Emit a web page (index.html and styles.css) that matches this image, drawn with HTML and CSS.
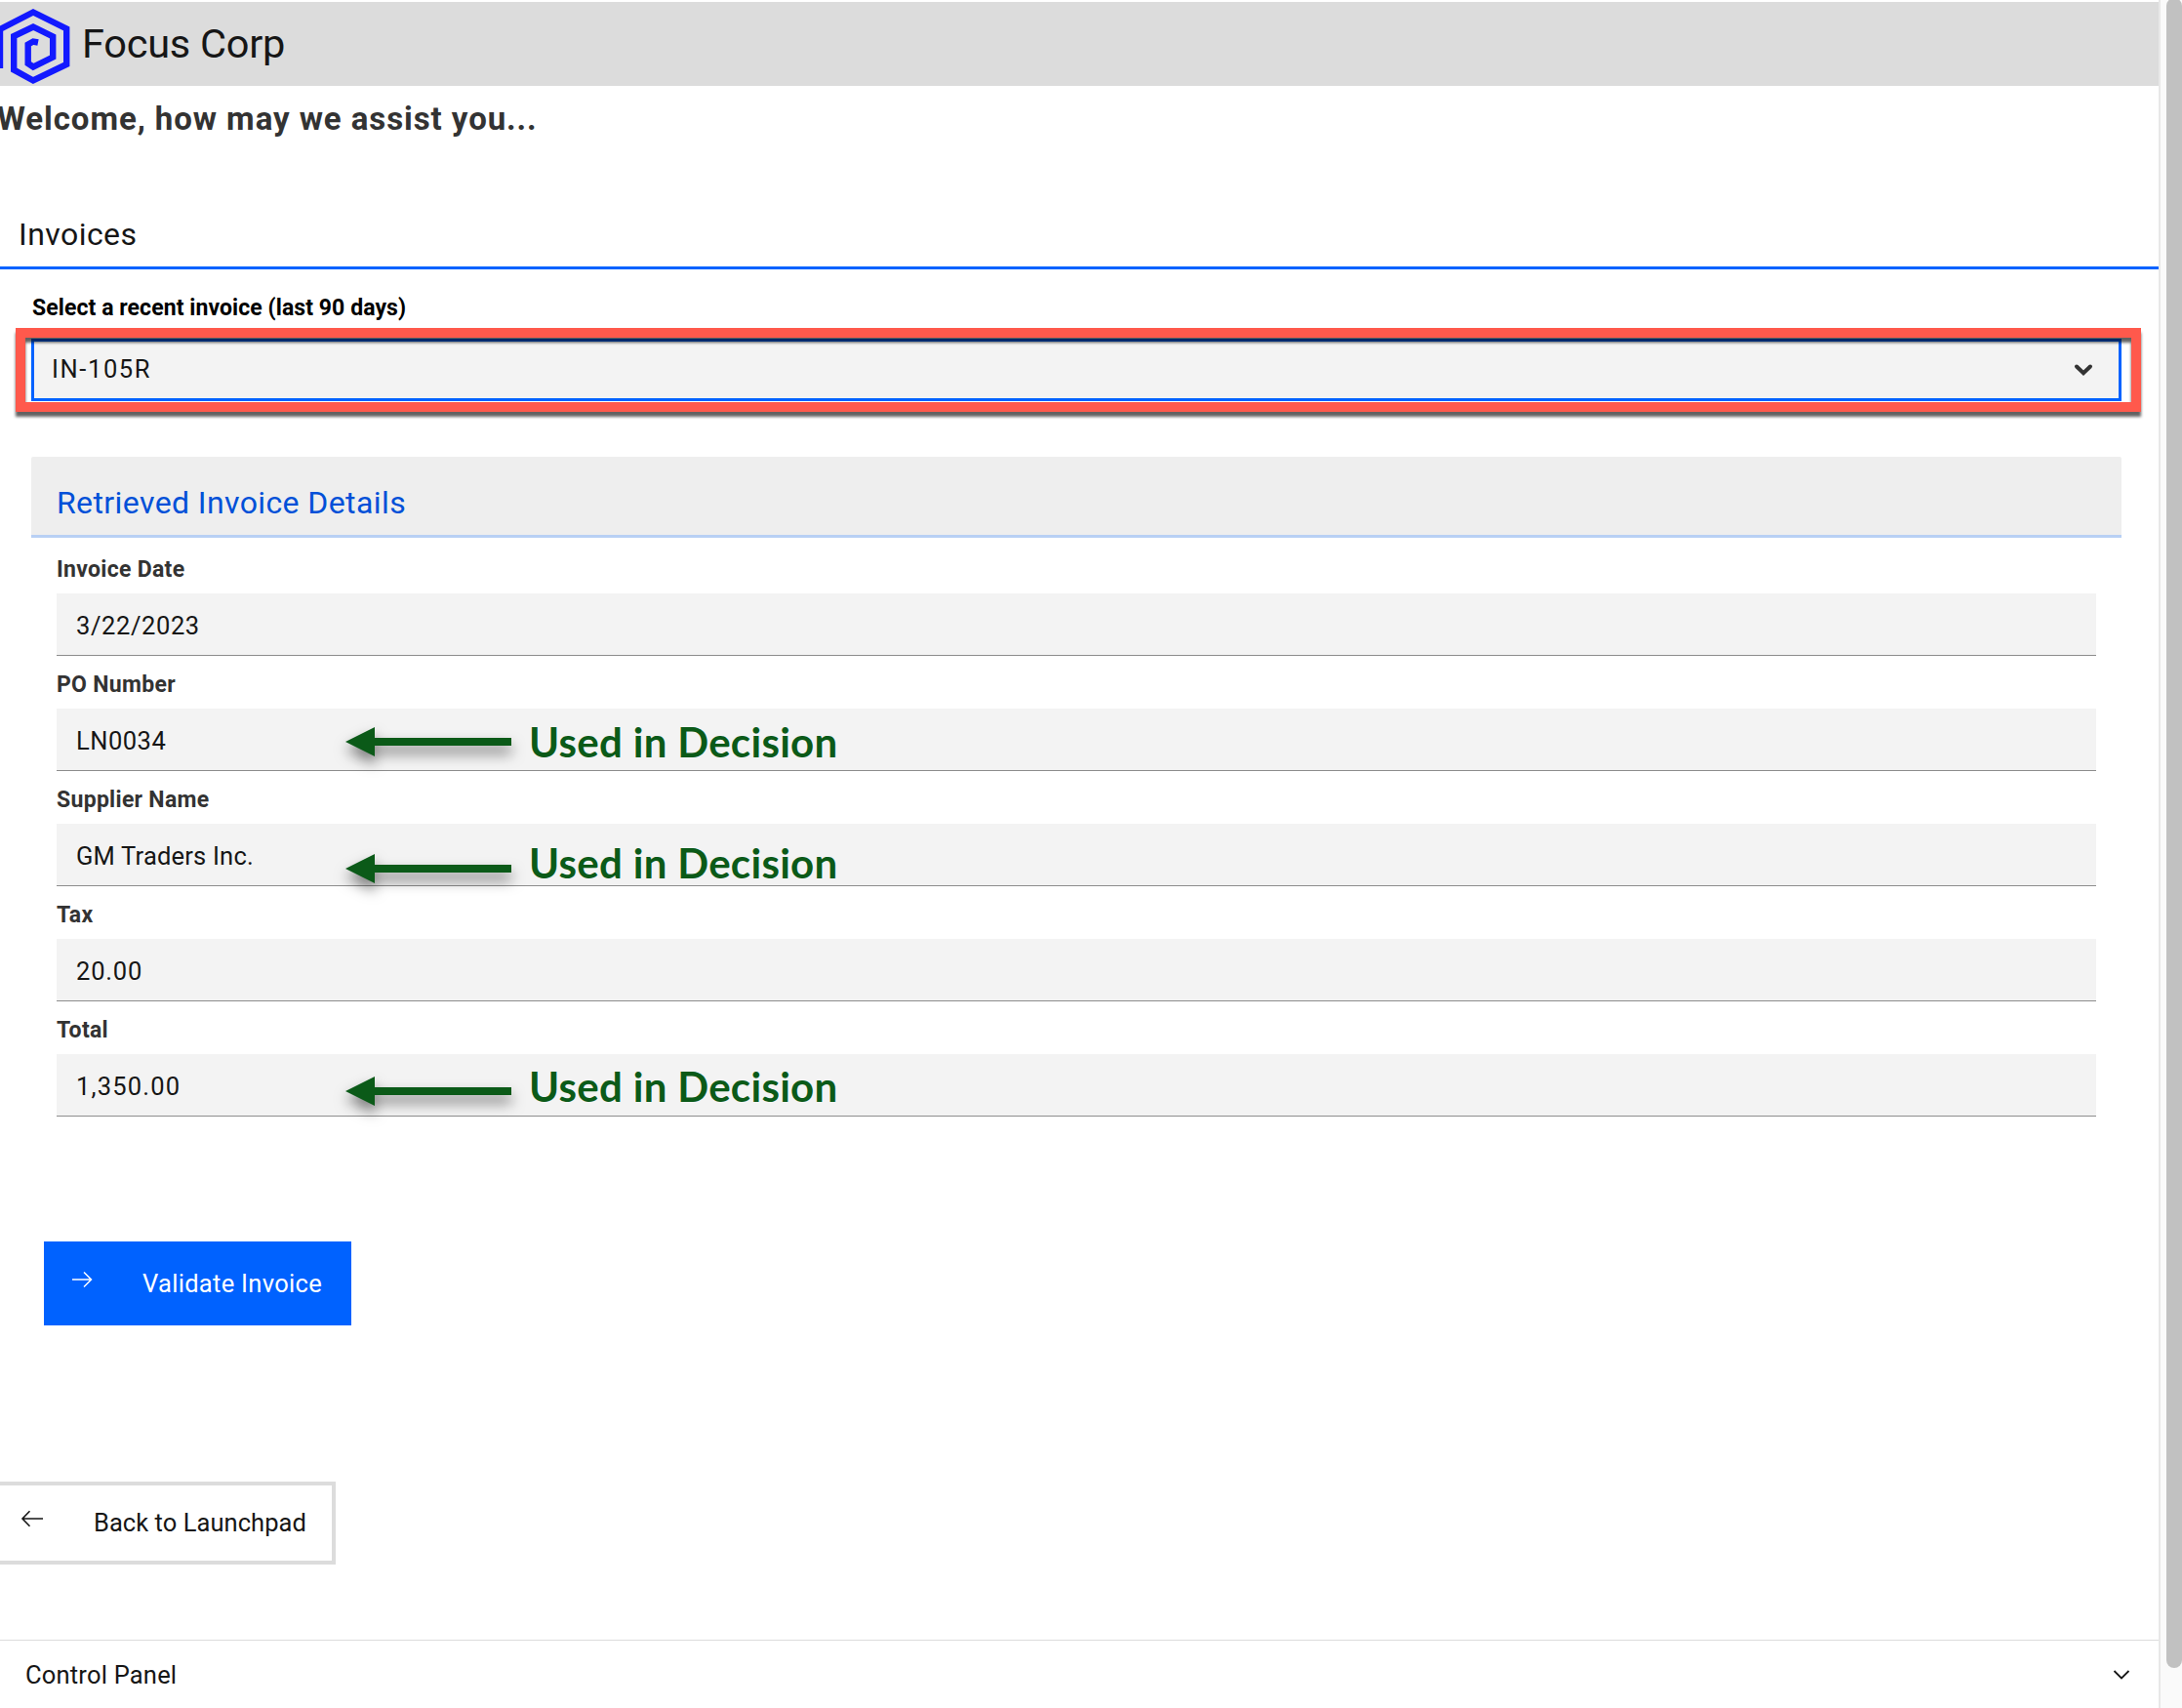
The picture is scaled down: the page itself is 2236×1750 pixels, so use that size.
FILE: index.html
```
<!DOCTYPE html>
<html lang="en">
<head>
<meta charset="utf-8">
<title>Focus Corp</title>
<link rel="stylesheet" href="styles.css">
</head>
<body>
<svg width="0" height="0" class="defs" aria-hidden="true">
  <symbol id="arrow" viewBox="0 0 170 30"><path d="M0 15 30 0V11H170V19H30V30Z" fill="#0b5a18"/></symbol>
</svg>
<div class="window">
  <main class="page">
    <header class="brand">
      <svg class="logo" width="74" height="86" viewBox="0 2 74 86" fill="none" stroke="#1219ff" stroke-width="6.4" stroke-linejoin="miter">
        <path d="M0 70V30L34 12.5 68.2 29.5V66L34 82.5 14.2 71.500V37L34 27.500 54.200 37.500V58.500L34 68.500 28.700 65V45.500L34 42.500 39 43.500"/>
      </svg>
      <span class="brand-name">Focus Corp</span>
    </header>
    <h1 class="welcome">Welcome, how may we assist you...</h1>
    <h2 class="section-title">Invoices</h2>

    <section class="picker">
      <label class="picker-label">Select a recent invoice (last 90 days)</label>
      <div class="select">
        <span class="select-value">IN-105R</span>
        <svg width="20" height="14" viewBox="0 0 20 14" fill="none" stroke="#333" stroke-width="4" stroke-linecap="round"><path d="M3 3.500 10 10.200 17 3.500"/></svg>
        <div class="highlight"></div>
      </div>
    </section>

    <section class="details">
      <h3 class="details-title">Retrieved Invoice Details</h3>
      <div class="fields">
        <label class="label">Invoice Date</label>
        <div class="field date">3/22/2023</div>
        <label class="label">PO Number</label>
        <div class="field po">LN0034
          <svg class="arrow"><use href="#arrow"/></svg><span class="note">Used in Decision</span>
        </div>
        <label class="label">Supplier Name</label>
        <div class="field supplier">GM Traders Inc.
          <svg class="arrow"><use href="#arrow"/></svg><span class="note">Used in Decision</span>
        </div>
        <label class="label">Tax</label>
        <div class="field tax">20.00</div>
        <label class="label">Total</label>
        <div class="field total">1,350.00
          <svg class="arrow"><use href="#arrow"/></svg><span class="note">Used in Decision</span>
        </div>
      </div>
    </section>

    <button class="button primary">
      <svg width="22" height="18" viewBox="0 0 22 18" fill="none" stroke="#fff" stroke-width="1.500"><path d="M1 9H20.500M13 1.500 20.500 9 13 16.500"/></svg>
      <span>Validate Invoice</span>
    </button>
    <button class="button secondary">
      <svg width="24" height="18" viewBox="0 0 24 18" fill="none" stroke="#161616" stroke-width="1.600"><path d="M23 9H2M9.500 1.300 2 9 9.500 16.700"/></svg>
      <span>Back to Launchpad</span>
    </button>

    <footer class="panel">
      <span>Control Panel</span>
      <svg width="18" height="12" viewBox="0 0 18 12" fill="none" stroke="#161616" stroke-width="1.800"><path d="M1.500 2 9 9.500 16.500 2"/></svg>
    </footer>
  </main>
  <div class="scrollbar"><div class="thumb"></div></div>
</div>
</body>
</html>
```
FILE: styles.css
```
* { box-sizing: border-box; }

body {
  margin: 0;
  background: #fff;
  color: #161616;
  font-family: Roboto, "Liberation Sans", sans-serif;
}

h1, h2, h3 { margin: 0; }
svg { display: block; flex: none; }
.defs { position: absolute; }

.window {
  display: flex;
  width: 2236px;
  height: 1750px;
  overflow: hidden;
}

.page {
  display: flex;
  flex-direction: column;
  width: 2212px;
  padding-top: 2px;
}

.brand {
  display: flex;
  align-items: center;
  height: 86px;
  background: #dcdcdc;
}
.brand-name {
  margin-left: 10px;
  padding-bottom: 2px;
  font-size: 41.5px;
  letter-spacing: -0.25px;
}

.welcome {
  margin-left: -3px;
  color: #333;
  font-size: 33px;
  font-weight: 700;
  line-height: 67px;
  letter-spacing: 0.93px;
}

.section-title {
  height: 69px;
  margin-top: 52px;
  padding-left: 19px;
  border-bottom: 3px solid #0062ff;
  font-size: 32px;
  font-weight: 400;
  line-height: 66px;
  letter-spacing: 0.45px;
}

.picker { padding: 24px 38px 0 32px; }
.picker-label {
  display: block;
  height: 47px;
  padding-left: 1px;
  color: #000;
  font-size: 23px;
  font-weight: 700;
  line-height: 32px;
  letter-spacing: 0.08px;
}
.select {
  position: relative;
  display: flex;
  align-items: center;
  justify-content: space-between;
  height: 64px;
  padding: 0 26px 0 18px;
  border: 3px solid #0062ff;
  background: #f3f3f3;
  font-size: 25.5px;
}
.select-value {
  padding-bottom: 3px;
  letter-spacing: 1.6px;
}

/* Callout frame around the invoice picker */
.highlight {
  position: absolute;
  inset: -14px -23px -14px -19px;
  border: 10px solid #ff594c;
  filter: drop-shadow(0 5px 1.5px rgba(0, 0, 0, 0.62));
}

.details { margin: 57px 38px 0 32px; }
.details-title {
  height: 83px;
  padding: 14px 26px 0;
  border-bottom: 3px solid #b8d0f4;
  border-radius: 2px 2px 0 0;
  background: #eee;
  color: #0050d8;
  font-size: 32px;
  font-weight: 400;
  line-height: 66px;
  letter-spacing: 0.4px;
}
.fields { padding: 3px 26px 0; }
.label {
  display: block;
  height: 54px;
  padding-top: 4px;
  color: #333;
  font-size: 23px;
  font-weight: 700;
  line-height: 52px;
  letter-spacing: 0.3px;
}
.field {
  position: relative;
  height: 64px;
  padding: 4px 20px 0;
  border-bottom: 1px solid #8d8d8d;
  background: #f3f3f3;
  font-size: 25.5px;
  line-height: 59px;
  letter-spacing: 0.5px;
}
.date { letter-spacing: 0.6px; }
.total { letter-spacing: 1.2px; }
.tax { letter-spacing: 0.8px; }
.supplier { letter-spacing: 0.2px; }

/* Annotations laid over the fields */
.arrow {
  position: absolute;
  top: var(--arrow-y);
  left: 296px;
  width: 170px;
  height: 30px;
  overflow: visible;
  filter: drop-shadow(0 8px 7px rgba(0, 0, 0, 0.5));
}
.note {
  position: absolute;
  top: var(--note-y);
  left: 484px;
  color: #0b5a18;
  font: 700 42px/50px Lato, sans-serif;
  letter-spacing: 0.3px;
  white-space: nowrap;
}
.po { --arrow-y: 19px; --note-y: 9px; }
.supplier { --arrow-y: 31px; --note-y: 15px; }
.total { --arrow-y: 23px; --note-y: 8px; }

.button {
  display: flex;
  align-items: center;
  flex: none;
  font: 400 25.5px/30px Roboto, sans-serif;
}
.button svg { position: relative; top: -4px; }
.primary {
  gap: 51px;
  width: 315px;
  height: 86px;
  margin: 128px 0 0 45px;
  padding: 0 0 0 28px;
  border: 0;
  background: #0062ff;
  color: #fff;
  letter-spacing: 0.3px;
}
.secondary {
  gap: 51px;
  width: 348px;
  height: 85px;
  margin: 160px 0 0 -4px;
  padding: 0 0 1px 21px;
  border: 4px solid #dcdcdc;
  background: #fff;
  color: #161616;
  letter-spacing: 0.05px;
}

.panel {
  display: flex;
  align-items: center;
  justify-content: space-between;
  height: 70px;
  margin-top: 77px;
  padding: 0 29px 0 26px;
  border-top: 1px solid #dcdcdc;
  font-size: 25.5px;
  letter-spacing: 0.2px;
}

.scrollbar {
  width: 24px;
  padding-left: 6px;
  border-left: 2px solid #e8e8e8;
  background: #fafafa;
}
.thumb {
  width: 16px;
  height: 1711px;
  margin-top: -2px;
  border-radius: 8px;
  background: #c1c1c1;
}
```
